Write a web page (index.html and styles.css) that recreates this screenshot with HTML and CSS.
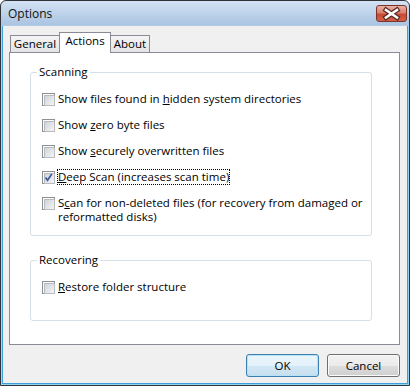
FILE: index.html
```html
<!DOCTYPE html>
<html lang="en">
<head>
    <meta charset="UTF-8">
    <meta name="viewport" content="width=device-width, initial-scale=1.0">
    <title>Options</title>
    <link rel="stylesheet" href="styles.css">
</head>
<body>
    <div class="window">
        <div class="titlebar">
            <span class="title">Options</span>
            <button class="close" aria-label="Close">
                <svg width="31" height="17" viewBox="0 0 31 17">
                    <path d="M10 5 L21 12.5 M21 5 L10 12.5" stroke="#5a2a22" stroke-width="5" stroke-linecap="square"/>
                    <path d="M10 5 L21 12.5 M21 5 L10 12.5" stroke="#ffffff" stroke-width="2.6" stroke-linecap="square"/>
                </svg>
            </button>
        </div>
        <div class="client">
            <div class="tabs">
                <div class="tab general">General</div>
                <div class="tab actions-tab active">Actions</div>
                <div class="tab about">About</div>
            </div>
            <div class="panel">
                <fieldset class="group scanning">
                    <legend>Scanning</legend>
                    <label class="row"><span class="check"></span><span class="text">Show files found in <u>h</u>idden system directories</span></label>
                    <label class="row"><span class="check"></span><span class="text">Show <u>z</u>ero byte files</span></label>
                    <label class="row"><span class="check"></span><span class="text">Show <u>s</u>ecurely overwritten files</span></label>
                    <label class="row"><span class="check checked">
                        <svg width="13" height="13" viewBox="0 0 13 13"><path d="M3.5 6.5 L5.5 9.2 L9.8 3" fill="none" stroke="#3b5a9a" stroke-width="1.7"/></svg>
                    </span><span class="text focus"><u>D</u>eep Scan (increases scan time)</span></label>
                    <label class="row"><span class="check"></span><span class="text">S<u>c</u>an for non-deleted files (for recovery from damaged or<br>reformatted disks)</span></label>
                </fieldset>
                <fieldset class="group recovering">
                    <legend>Recovering</legend>
                    <label class="row"><span class="check"></span><span class="text"><u>R</u>estore folder structure</span></label>
                </fieldset>
            </div>
            <div class="actions">
                <button class="btn default">OK</button>
                <button class="btn">Cancel</button>
            </div>
        </div>
    </div>
</body>
</html>
```

FILE: styles.css
```css
* {
    margin: 0;
    padding: 0;
    box-sizing: border-box;
}

body {
    background: #ffffff;
    font-family: "Open Sans", "Liberation Sans", sans-serif;
    font-size: 11.5px;
    color: #000;
}

.window {
    width: 410px;
    height: 386px;
    border: 1px solid #303438;
    border-radius: 6px 6px 0 0;
    padding: 0 1px 1px;
    background: linear-gradient(#d3e2f3, #aac4e2 24px, #b9d1ea 25px);
    display: flex;
    flex-direction: column;
}

.titlebar {
    height: 25px;
    display: flex;
    justify-content: space-between;
    align-items: flex-start;
}

.title {
    padding: 4px 0 0 6px;
    font-size: 12px;
    color: #111;
}

.close {
    width: 31px;
    height: 17px;
    margin: 4px 1px 0 0;
    border: 1px solid #7c3326;
    border-radius: 3px;
    background: linear-gradient(#eab1a5, #d98270 45%, #c84a33 55%, #d0604a);
    display: flex;
}

.close svg {
    margin: -1px;
}

.client {
    flex: 1;
    background: #f0f0f0;
    border: 1px solid #3c9fdc;
    border-top: none;
    box-shadow: 1px 1px 0 #8fd4f2;
}

.tabs {
    height: 26px;
    padding-left: 7px;
    display: flex;
    align-items: flex-end;
}

.tab {
    height: 17px;
    padding-top: 1px;
    margin-right: -1px;
    border: 1px solid #898c95;
    border-bottom: none;
    background: linear-gradient(#f4f4f4, #e4e4e4);
    line-height: 14px;
    text-align: center;
}

.tab.general {
    width: 50px;
}

.tab.actions-tab {
    width: 52px;
}

.tab.about {
    width: 40px;
}

.tab.active {
    position: relative;
    z-index: 1;
    height: 21px;
    margin-bottom: -1px;
    background: #fff;
}

.panel {
    height: 293px;
    margin: 0 7px 0 6px;
    border: 1px solid #898c95;
    background: #fff;
    padding: 0 27px 0 20px;
}

.group {
    border: 1px solid #d5dfe5;
    border-radius: 3px;
    padding: 6px 8px 5px 6px;
}

.group legend {
    padding: 0 2px;
    line-height: 16px;
}

.scanning {
    margin-top: 11px;
}

.recovering {
    margin-top: 16px;
    padding-bottom: 20px;
}

.row {
    display: flex;
    align-items: flex-start;
    gap: 3px;
    padding: 6px 0 6px 5px;
    line-height: 14px;
}

.check {
    flex: none;
    width: 13px;
    height: 13px;
    margin-top: 1px;
    border: 1px solid #8e8f8f;
    background: #fdfdfd;
    padding: 1px;
    position: relative;
}

.check::before {
    content: "";
    display: block;
    width: 9px;
    height: 9px;
    border: 1px solid #b8bcc2;
    background: linear-gradient(135deg, #d0d4da, #f4f5f6);
}

.check svg {
    position: absolute;
    left: -1px;
    top: -1px;
}

.focus {
    outline: 1px dotted #000;
}

.actions {
    display: flex;
    justify-content: flex-end;
    gap: 8px;
    margin: 9px 7px 0;
}

.btn {
    width: 73px;
    height: 23px;
    border: 1px solid #707070;
    border-radius: 3px;
    background: linear-gradient(#f2f2f2, #ebebeb 50%, #dddddd 51%, #cfcfcf);
    box-shadow: inset 0 0 0 1px #fbfbfb;
    font-family: inherit;
    font-size: 11.5px;
    color: #000;
}

.btn.default {
    border-color: #3c7fb1;
    box-shadow: inset 0 0 0 1px #b8e2f8;
    background: linear-gradient(#eaf6fd, #e3f1fa 50%, #d3e8f5 51%, #c6deed);
}
```
